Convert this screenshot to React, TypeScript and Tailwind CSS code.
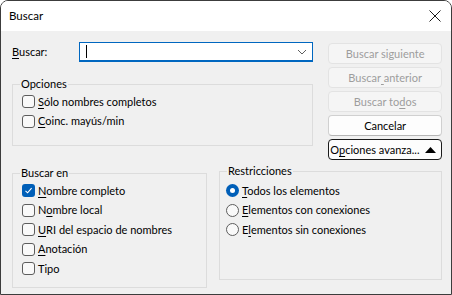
import React from 'react';

const font = { fontFamily: 'Lato, "Liberation Sans", sans-serif' };

const U: React.FC<{ children: React.ReactNode }> = ({ children }) => <span className="underline underline-offset-2">{children}</span>;

const CheckBox: React.FC<{ checked?: boolean; children: React.ReactNode }> = ({ checked, children }) => (
  <div className="flex h-[19.5px] items-center gap-[3px]">
    {checked ? (
      <span className="flex h-[13px] w-[13px] items-center justify-center rounded-[3px] bg-[#005fb8]">
        <svg width="9" height="9" viewBox="0 0 9 9" fill="none">
          <path d="M1.5 4.8 L3.6 6.8 L7.6 2.2" stroke="white" strokeWidth="1.1" />
        </svg>
      </span>
    ) : (
      <span className="h-[13px] w-[13px] rounded-[3px] border border-[#5d5d5d] bg-[#f9f9f9]" />
    )}
    <span className="leading-[14px]">{children}</span>
  </div>
);

const Radio: React.FC<{ checked?: boolean; children: React.ReactNode }> = ({ checked, children }) => (
  <div className="flex h-[19.5px] items-center gap-[3px]">
    {checked ? (
      <span className="flex h-[13px] w-[13px] items-center justify-center rounded-full bg-[#005fb8]">
        <span className="h-[5px] w-[5px] rounded-full bg-white" />
      </span>
    ) : (
      <span className="h-[13px] w-[13px] rounded-full border border-[#5d5d5d] bg-[#f9f9f9]" />
    )}
    <span className="leading-[14px]">{children}</span>
  </div>
);

const Group: React.FC<{ title: string; className?: string; bodyClass?: string; children: React.ReactNode }> = ({ title, className, bodyClass, children }) => (
  <fieldset className={`border border-[#dcdcdc] ${className ?? ''}`}>
    <legend className="ml-[7px] px-[1px] leading-[14px]">{title}</legend>
    <div className={bodyClass}>{children}</div>
  </fieldset>
);

const Btn: React.FC<{ disabled?: boolean; focused?: boolean; children: React.ReactNode }> = ({ disabled, focused, children }) => {
  const look = disabled
    ? 'border-[#e3e3e3] bg-[#f5f5f5] text-[#9d9d9d] justify-center'
    : focused
      ? 'border-[#1b1b1b] bg-[#fdfdfd] text-black justify-between pl-[1px] pr-[5px]'
      : 'border-[#d0d0d0] border-b-[#b5b5b5] bg-[#fdfdfd] text-black justify-center';
  return <div className={`flex h-[21px] items-center whitespace-nowrap rounded-[4px] border leading-[14px] ${look}`}>{children}</div>;
};

export default function App() {
  return (
    <div style={font} className="flex h-[295px] w-[452px] flex-col overflow-hidden rounded-t-[8px] border border-[#3c3c3c] text-[11px] text-black">
      <div className="flex h-[30px] shrink-0 items-center justify-between bg-white pl-[8px] pr-[10px]">
        <span className="text-[11.5px]">Buscar</span>
        <svg width="12" height="12" viewBox="0 0 12 12" fill="none">
          <path d="M0.5 0.5 L11.5 11.5 M11.5 0.5 L0.5 11.5" stroke="#1b1b1b" strokeWidth="1" />
        </svg>
      </div>

      <div className="flex flex-1 flex-col bg-[#f0f0f0] pl-[11px] pr-[9px] pt-[11px]">
        <div className="flex gap-[15px]">
          <div className="flex w-[302px] flex-col">
            <div className="flex h-[20px] items-center">
              <span className="w-[67px]"><U>B</U>uscar:</span>
              <div className="flex h-[20px] w-[234px] items-center justify-between border border-b-2 border-[#0067c0] bg-white pl-[6px] pr-[5px]">
                <span className="h-[13px] w-[1px] bg-black" />
                <svg width="10" height="6" viewBox="0 0 10 6" fill="none">
                  <path d="M1 1 L5 5 L9 1" stroke="#5f5f5f" strokeWidth="1" />
                </svg>
              </div>
            </div>
            <Group title="Opciones" className="mt-[15px] pb-[14px]" bodyClass="pl-[9px] pt-[1px]">
              <CheckBox><U>S</U>ólo nombres completos</CheckBox>
              <CheckBox><U>C</U>oinc. mayús/min</CheckBox>
            </Group>
          </div>

          <div className="mt-[1px] flex w-[114px] flex-col gap-[3px]">
            <Btn disabled>Buscar siguiente</Btn>
            <Btn disabled>Buscar<U>&nbsp;</U>anterior</Btn>
            <Btn disabled>Buscar to<U>d</U>os</Btn>
            <Btn>Cancelar</Btn>
            <Btn focused>
              <span>O<U>p</U>ciones avanza...</span>
              <svg width="11" height="6" viewBox="0 0 11 6">
                <path d="M0 6 L5.5 0 L11 6 Z" fill="#000" />
              </svg>
            </Btn>
          </div>
        </div>

        <div className="mt-[4px] flex items-start gap-[12px]">
          <Group title="Buscar en" className="mt-[2px] w-[195px] pb-[8px]" bodyClass="pl-[9px] pt-[1px]">
            <CheckBox checked><U>N</U>ombre completo</CheckBox>
            <CheckBox>N<U>o</U>mbre local</CheckBox>
            <CheckBox><U>U</U>RI del espacio de nombres</CheckBox>
            <CheckBox><U>A</U>notación</CheckBox>
            <CheckBox>Tipo</CheckBox>
          </Group>
          <Group title="Restricciones" className="h-[116px] w-[223px]" bodyClass="pl-[6px] pt-[3px]">
            <Radio checked><U>T</U>odos los elementos</Radio>
            <Radio><U>E</U>lementos con conexiones</Radio>
            <Radio>E<U>l</U>ementos sin conexiones</Radio>
          </Group>
        </div>
      </div>
    </div>
  );
}
